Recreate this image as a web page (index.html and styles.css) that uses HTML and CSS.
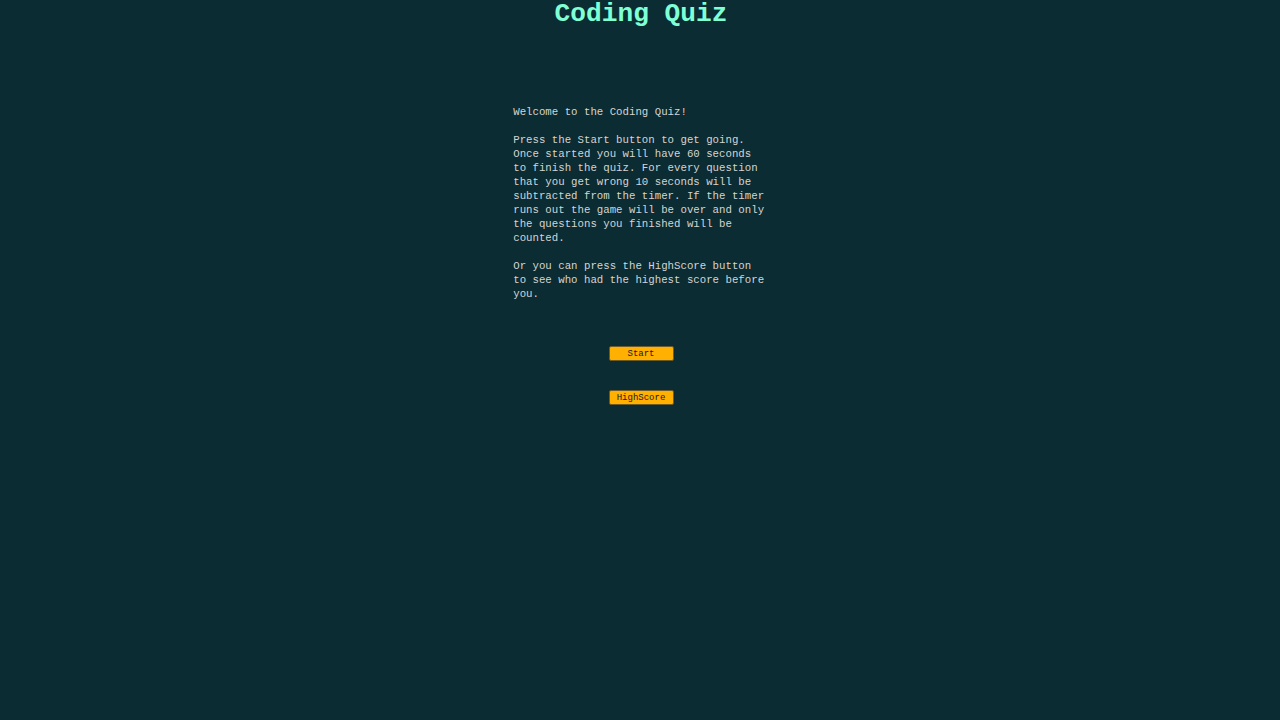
FILE: index.html
```html
<!DOCTYPE html>
<html>
<head>
<meta charset="utf-8">
<link rel="stylesheet" href="styles.css">
</head>
<body>
<header class="header"><h1 class="title">Coding Quiz</h1></header>
<main class="intro">
  <p class="text">Welcome to the Coding Quiz!</p>
  <p class="text">Press the Start button to get going. Once started you will have 60 seconds to finish the quiz. For every question that you get wrong 10 seconds will be subtracted from the timer. If the timer runs out the game will be over and only the questions you finished will be counted.</p>
  <p class="text">Or you can press the HighScore button to see who had the highest score before you.</p>
  <div class="buttons">
    <button class="btn">Start</button>
    <button class="btn">HighScore</button>
  </div>
</main>
</body>
</html>
```
FILE: styles.css
```css
html, body {
  margin: 0;
  padding: 0;
  background: #0b2c32;
  height: 100%;
}
body {
  font-family: "Liberation Mono", "Courier New", monospace;
  color: #d4d4d4;
  padding-left: 2px;
}
.header {
  text-align: center;
}
.title {
  margin: 0;
  font-size: 26.2px;
  line-height: 28px;
  color: #7fffd4;
  font-weight: bold;
}
.intro {
  width: 20%;
  margin: 0 auto;
  padding-top: 77px;
}
.text {
  font-size: 10.73px;
  line-height: 14px;
  margin: 0 0 14px;
}
.buttons {
  display: flex;
  flex-direction: column;
  align-items: center;
  gap: 29px;
  padding-top: 31px;
}
.btn {
  width: 65px;
  height: 15px;
  padding: 2px 0 0;
  font-family: "Liberation Mono", "Courier New", monospace;
  font-size: 9px;
  line-height: 11px;
  color: #1a1a1a;
  background: #ffb000;
  border: 1px solid #6b5a2a;
  border-radius: 2px;
}
```
